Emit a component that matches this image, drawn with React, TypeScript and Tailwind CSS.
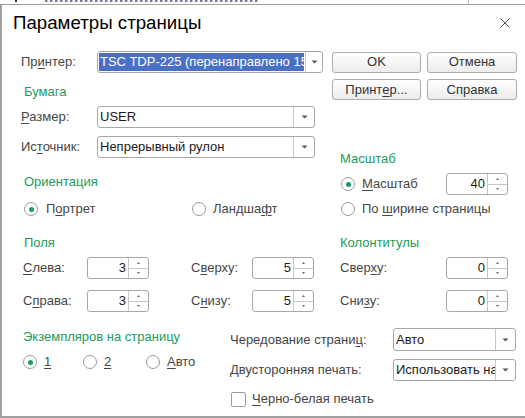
import React from 'react';

const lbl = 'text-[13px] leading-[16px] text-[#464646] whitespace-nowrap';
const head = 'text-[13px] leading-[16px] text-[#1b9b5e] whitespace-nowrap';

function DownArrow() {
  return (
    <svg width="7" height="4" viewBox="0 0 7 4">
      <path d="M0.5 0.5h6l-3 3z" fill="#555" />
    </svg>
  );
}

function Combo({ w, btn = 'w-[20px]', value, selected = false, h = 'h-[22px]' }: { w: string; btn?: string; value: string; selected?: boolean; h?: string }) {
  return (
    <div className={`flex ${h} ${w} shrink-0 overflow-hidden rounded-[3px] border border-[#a8a8a8] bg-white`}>
      <div className="flex min-w-0 flex-1 items-center overflow-hidden whitespace-nowrap text-[13px] text-[#1a1a1a]">
        {selected ? (
          <div className="m-[1px] flex h-[calc(100%-2px)] flex-1 items-center overflow-hidden bg-[#4a70c5] text-white">
            <span className="mr-[1px] h-full w-px bg-[#c8b040]" />
            {value}
          </div>
        ) : (
          <span className="pl-[2px]">{value}</span>
        )}
      </div>
      <div className={`flex ${btn} shrink-0 items-center justify-center border-l border-[#c8c8c8]`}>
        <DownArrow />
      </div>
    </div>
  );
}

function Spin({ value }: { value: string }) {
  return (
    <div className="flex h-[22px] w-[62px] shrink-0 rounded-[3px] border border-[#a8a8a8] bg-white">
      <div className="flex flex-1 items-center justify-end pr-[2px] text-[13px] text-[#1a1a1a]">{value}</div>
      <div className="flex w-[20px] flex-col border-l border-[#c8c8c8]">
        <div className="flex flex-1 items-center justify-center border-b border-[#c8c8c8]">
          <svg width="3" height="2" viewBox="0 0 3 2">
            <path d="M0 2h3L1.5 0z" fill="#666" />
          </svg>
        </div>
        <div className="flex flex-1 items-center justify-center">
          <svg width="3" height="2" viewBox="0 0 3 2">
            <path d="M0 0h3L1.5 2z" fill="#666" />
          </svg>
        </div>
      </div>
    </div>
  );
}

function Button({ w, children }: { w: string; children: React.ReactNode }) {
  return (
    <div className={`flex h-[21px] ${w} shrink-0 items-center justify-center rounded-[3px] border border-[#adadad] bg-linear-to-b from-white to-[#ececec] text-[13px] text-[#333]`}>
      {children}
    </div>
  );
}

function Radio({ checked = false }: { checked?: boolean }) {
  return (
    <span className="flex h-[14px] w-[14px] shrink-0 items-center justify-center rounded-full border border-[#9a9a9a] bg-white">
      {checked && <span className="h-[5px] w-[5px] rounded-full bg-[#1b9b5e]" />}
    </span>
  );
}

function U({ children }: { children: React.ReactNode }) {
  return <span className="underline underline-offset-[2px]">{children}</span>;
}

export default function App() {
  return (
    <div className="h-[418px] w-[525px] overflow-hidden bg-white font-['Liberation_Sans','Arial',sans-serif]">
      {/* окно позади диалога */}
      <div className="flex h-[4px] items-start">
        <div className="ml-[15px] h-[2px] w-[2px] bg-[#333]" />
        <div className="ml-[28px] h-[2px] w-[215px] bg-[repeating-linear-gradient(90deg,#7d6fa0_0_2px,#c9c3da_2px_3px,transparent_3px_5px)]" />
        <div className="ml-[208px] h-[4px] w-px bg-[#c0c0c0]" />
      </div>

      <div className="h-[414px] border-t border-b-2 border-l-2 border-[#a0a0a0]">
        {/* заголовок */}
        <div className="flex h-[46px] items-start justify-between pt-[8px] pr-[15px] pl-[11px]">
          <div className="text-[18.7px] leading-[20px] text-black">Параметры страницы</div>
          <svg className="mt-[5px]" width="10" height="10" viewBox="0 0 10 10">
            <path d="M0.5 0.5l9 9M9.5 0.5l-9 9" stroke="#555" strokeWidth="1" />
          </svg>
        </div>

        <div className="pl-[19px]">
          {/* принтер */}
          <div className="flex h-[22px] items-center">
            <div className={`w-[76px] ${lbl}`}>
              Пр<U>и</U>нтер:
            </div>
            <Combo w="w-[226px]" btn="w-[17px]" value="TSC TDP-225 (перенаправлено 15)" selected />
            <div className="ml-[9px]">
              <Button w="w-[89px]">OK</Button>
            </div>
            <div className="ml-[6px]">
              <Button w="w-[90px]">Отмена</Button>
            </div>
          </div>

          <div className="mt-[6px] flex h-[21px] items-start">
            <div className={`mt-[5px] w-[311px] pl-[3px] ${head}`}>Бумага</div>
            <Button w="w-[89px]">
              Принт<U>е</U>р...
            </Button>
            <div className="ml-[6px]">
              <Button w="w-[90px]">Справка</Button>
            </div>
          </div>

          <div className="mt-[6px] flex h-[22px] items-center">
            <div className={`w-[76px] ${lbl}`}>
              <U>Р</U>азмер:
            </div>
            <Combo w="w-[218px]" btn="w-[21px]" value="USER" />
          </div>

          {/* источник, ориентация, масштаб */}
          <div className="mt-[8px] flex">
            <div className="w-[319px]">
              <div className="flex h-[22px] items-center">
                <div className={`w-[76px] ${lbl}`}>
                  Ис<U>т</U>очник:
                </div>
                <Combo w="w-[218px]" btn="w-[21px]" value="Непрерывный рулон" />
              </div>
              <div className={`mt-[16px] h-[16px] pl-[3px] ${head}`}>Ориентация</div>
              <div className="mt-[11px] flex h-[16px] items-center pl-[3px]">
                <div className="flex w-[168px] items-center gap-[8px]">
                  <Radio checked />
                  <span className={lbl}>
                    П<U>о</U>ртрет
                  </span>
                </div>
                <div className="flex items-center gap-[7px]">
                  <Radio />
                  <span className={lbl}>
                    Ландша<U>ф</U>т
                  </span>
                </div>
              </div>
            </div>
            <div>
              <div className={`mt-[15px] h-[16px] ${head}`}>Масштаб</div>
              <div className="mt-[6px] flex h-[22px] items-center">
                <div className="ml-[1px] flex w-[105px] items-center gap-[7px]">
                  <Radio checked />
                  <span className={lbl}>
                    <U>М</U>асштаб
                  </span>
                </div>
                <Spin value="40" />
              </div>
              <div className="mt-[6px] ml-[1px] flex h-[16px] items-center gap-[7px]">
                <Radio />
                <span className={lbl}>
                  По <U>ш</U>ирине страницы
                </span>
              </div>
            </div>
          </div>

          {/* поля и колонтитулы */}
          <div className="mt-[18px] flex h-[16px]">
            <div className={`w-[319px] pl-[3px] ${head}`}>Поля</div>
            <div className={head}>Колонтитулы</div>
          </div>
          <div className="mt-[6px] flex h-[22px] items-center">
            <div className={`w-[66px] pl-[2px] ${lbl}`}>
              <U>С</U>лева:
            </div>
            <Spin value="3" />
            <div className={`ml-[42px] w-[61px] ${lbl}`}>
              С<U>в</U>ерху:
            </div>
            <Spin value="5" />
            <div className={`ml-[26px] w-[106px] ${lbl}`}>
              Свер<U>х</U>у:
            </div>
            <Spin value="0" />
          </div>
          <div className="mt-[11px] flex h-[22px] items-center">
            <div className={`w-[66px] pl-[2px] ${lbl}`}>
              С<U>п</U>рава:
            </div>
            <Spin value="3" />
            <div className={`ml-[42px] w-[61px] ${lbl}`}>
              С<U>н</U>изу:
            </div>
            <Spin value="5" />
            <div className={`ml-[26px] w-[106px] ${lbl}`}>
              Сни<U>з</U>у:
            </div>
            <Spin value="0" />
          </div>

          {/* экземпляры и печать */}
          <div className="mt-[16px] flex">
            <div className="w-[209px]">
              <div className={`mt-[1px] h-[16px] pl-[2px] ${head}`}>Экземпляров на страницу</div>
              <div className="mt-[9px] flex h-[16px] items-center pl-[2px]">
                <div className="flex w-[60px] items-center gap-[7px]">
                  <Radio checked />
                  <span className={lbl}>
                    <U>1</U>
                  </span>
                </div>
                <div className="flex w-[63px] items-center gap-[7px]">
                  <Radio />
                  <span className={lbl}>
                    <U>2</U>
                  </span>
                </div>
                <div className="flex items-center gap-[7px]">
                  <Radio />
                  <span className={lbl}>
                    <U>А</U>вто
                  </span>
                </div>
              </div>
            </div>
            <div>
              <div className="flex h-[23px] items-center">
                <div className={`w-[163px] ${lbl}`}>
                  Чередование страни<U>ц</U>:
                </div>
                <Combo w="w-[123px]" h="h-[23px]" value="Авто" />
              </div>
              <div className="mt-[8px] flex h-[22px] items-center">
                <div className={`w-[163px] ${lbl}`}>Двусторонняя печать:</div>
                <Combo w="w-[123px]" value="Использовать настройки принтера" />
              </div>
              <div className="mt-[10px] flex items-center gap-[6px] pl-px">
                <span className="h-[15px] w-[15px] rounded-[2px] border border-[#9a9a9a] bg-white" />
                <span className={lbl}>
                  <U>Ч</U>ерно-белая печать
                </span>
              </div>
            </div>
          </div>
        </div>
      </div>
    </div>
  );
}
